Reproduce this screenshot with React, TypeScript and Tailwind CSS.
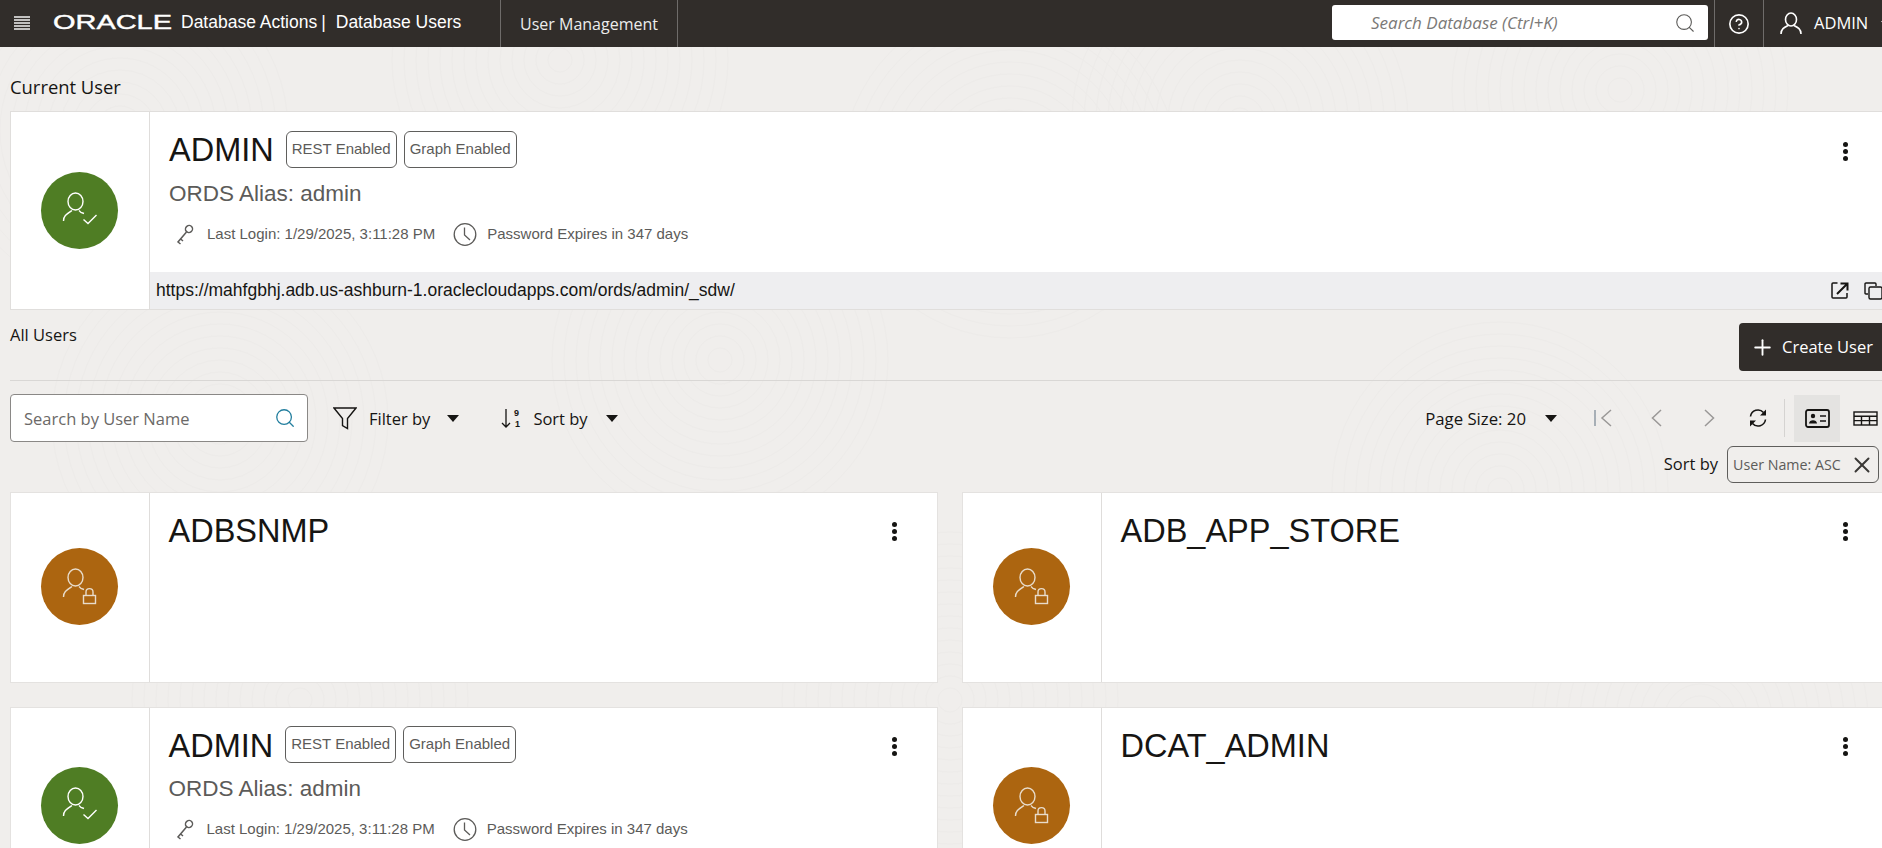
import React from 'react';
import { Search, Plus, X, CircleHelp } from 'lucide-react';

const LIST_USERS = [
  { name: 'ADBSNMP', active: false },
  { name: 'ADB_APP_STORE', active: false },
  { name: 'ADMIN', active: true },
  { name: 'DCAT_ADMIN', active: false },
];

const SWIRLS = [
  { x: 120, y: 130 }, { x: 560, y: 60 }, { x: 1010, y: 170 }, { x: 1240, y: 120 },
  { x: 1620, y: 90 }, { x: 220, y: 420 }, { x: 720, y: 360 }, { x: 1500, y: 490 },
  { x: 950, y: 700 }, { x: 300, y: 700 }, { x: 1700, y: 720 },
];

const SWIRL_RADII = [12, 24, 36, 48, 60, 72, 84, 96, 108, 120, 132, 144, 156, 168];

function Caret() {
  return <span className="inline-block h-0 w-0 border-x-[6px] border-t-[7px] border-x-transparent border-t-[#161513]" />;
}

function Avatar({ active }: { active: boolean }) {
  const stroke = active ? '#ffffff' : '#e8dccb';
  return (
    <div className={`flex h-[77px] w-[77px] shrink-0 items-center justify-center rounded-full ${active ? 'bg-[#4f7d24]' : 'bg-[#ac6510]'}`}>
      <svg width="77" height="77" viewBox="0 0 77 77" fill="none" stroke={stroke} strokeWidth="1.4">
        <ellipse cx="34.5" cy="29.5" rx="7.5" ry="8.5" />
        <path d="M22.5 49 C22.5 44 25 42.5 31 38.5 M38 38.5 L40 40.5 L43 41.5" />
        {active ? (
          <path d="M42.5 47.5 L47 51.5 L55.5 43" />
        ) : (
          <g>
            <rect x="42.5" y="47.5" width="12" height="8" />
            <path d="M45 47.5 V44 C45 39.5 52 39.5 52 44 V47.5" />
          </g>
        )}
      </svg>
    </div>
  );
}

function Kebab() {
  return (
    <div className="flex flex-col gap-[2px]">
      <span className="h-[5px] w-[5px] rounded-full bg-[#161513]" />
      <span className="h-[5px] w-[5px] rounded-full bg-[#161513]" />
      <span className="h-[5px] w-[5px] rounded-full bg-[#161513]" />
    </div>
  );
}

function Badge({ children }: { children: React.ReactNode }) {
  return (
    <span className="flex h-[37px] items-center rounded-[6px] border border-[#5f5e5c] px-[5px] text-[15px] text-[#5c5b59]">
      {children}
    </span>
  );
}

function UserDetails() {
  return (
    <>
      <div className="mt-[11px] h-[30px] text-[22.5px] leading-[30px] text-[#5c5b59]">ORDS Alias: admin</div>
      <div className="mt-[13px] flex h-[24px] items-center text-[15px] text-[#5c5b59]">
        <svg className="ml-[7px]" width="18" height="21" viewBox="0 0 18 21" fill="none" stroke="#5c5b59" strokeWidth="1.5">
          <ellipse cx="13" cy="5" rx="3.6" ry="3.4" transform="rotate(-40 13 5)" />
          <path d="M10.5 8 L2 18 L4.5 20 M4.7 15 L7 17" />
        </svg>
        <span className="ml-[13px]">Last Login: 1/29/2025, 3:11:28 PM</span>
        <svg className="ml-[18px]" width="24" height="25" viewBox="0 0 24 25" fill="none" stroke="#5c5b59" strokeWidth="1.3">
          <circle cx="12" cy="12.5" r="10.8" />
          <path d="M11.5 5.5 V13 L17 18" />
        </svg>
        <span className="ml-[10px]">Password Expires in 347 days</span>
      </div>
    </>
  );
}

function UserCard({ name, active }: { name: string; active: boolean }) {
  return (
    <div className="flex border border-[#e4e2e0] bg-white">
      <div className="flex w-[138.5px] shrink-0 items-center justify-center border-r border-[#dfdddb] pb-[2px]">
        <Avatar active={active} />
      </div>
      <div className="flex min-w-0 flex-1 justify-between pl-[19px] pr-[40px] pt-[18px]">
        <div>
          <div className="flex items-center">
            <h2 className="mr-[12px] h-[37px] text-[32.5px] leading-[40px] text-[#161513]">{name}</h2>
            {active && (
              <div className="flex gap-[7px]">
                <Badge>REST Enabled</Badge>
                <Badge>Graph Enabled</Badge>
              </div>
            )}
          </div>
          {active && <UserDetails />}
        </div>
        <div className="pt-[11px]">
          <Kebab />
        </div>
      </div>
    </div>
  );
}

function Header() {
  return (
    <header className="flex h-[47px] w-[1882px] items-stretch bg-[#312d2a] text-white">
      <svg className="ml-[14px] mt-[16px] shrink-0" width="16" height="14" viewBox="0 0 16 14" stroke="#f2f2f2" strokeWidth="1.3">
        <path d="M0 1 H16 M0 4 H16 M0 7 H16 M0 10 H16 M0 13 H16" />
      </svg>
      <svg className="ml-[23px] mt-[12px] shrink-0" width="122" height="20" viewBox="0 0 122 20">
        <text x="0" y="17" fontFamily="'Liberation Sans', sans-serif" fontSize="19.5" fill="#ffffff" stroke="#ffffff" strokeWidth="0.4" textLength="119" lengthAdjust="spacingAndGlyphs">ORACLE</text>
      </svg>
      <div className="ml-[6px] flex w-[319px] shrink-0 items-center pb-[3px] text-[17.5px]">
        <span>Database Actions</span>
        <span className="ml-[4px]">|</span>
        <span className="ml-[10px]">Database Users</span>
      </div>
      <div className="flex w-[178px] shrink-0 items-center justify-center border-x border-[#6f6c6a] font-['Open_Sans',sans-serif] text-[16px] text-[#ececec]">
        User Management
      </div>
      <div className="ml-[654px] mt-[5px] flex h-[35px] w-[376px] shrink-0 items-center justify-between rounded-[3px] bg-white pl-[39px] pr-[12px] font-['Open_Sans',sans-serif] text-[17px] italic text-[#7b7977]">
        <span>Search Database (Ctrl+K)</span>
        <Search size={22} strokeWidth={1.2} className="text-[#5c5b59]" />
      </div>
      <div className="ml-[6px] flex w-[50px] shrink-0 items-center justify-center border-x border-[#6f6c6a]">
        <CircleHelp size={22} strokeWidth={1.8} />
      </div>
      <div className="flex shrink-0 items-center pl-[16px] font-['Open_Sans',sans-serif] text-[16.5px]">
        <svg width="22" height="23" viewBox="0 0 22 23" fill="none" stroke="#ffffff" strokeWidth="1.6">
          <ellipse cx="11" cy="7.5" rx="5.5" ry="6.5" />
          <path d="M1 22 C1 17 4 15.5 8 13.5 M14 13.5 C18 15.5 21 17 21 22" />
        </svg>
        <span className="ml-[12px] shrink-0">ADMIN</span>
        <span className="ml-[13px] h-0 w-0 shrink-0 border-x-[5px] border-t-[6px] border-x-transparent border-t-white" />
      </div>
    </header>
  );
}

function CurrentUser() {
  return (
    <div className="flex h-[199px] border border-[#e0dedc] bg-white">
      <div className="flex w-[139px] shrink-0 items-center justify-center border-r border-[#dfdddb] pr-[2px]">
        <Avatar active />
      </div>
      <div className="flex min-w-0 flex-1 flex-col">
        <div className="flex flex-1 justify-between pl-[19px] pr-[40px] pt-[19px]">
          <div>
            <div className="flex items-center">
              <h2 className="mr-[12px] h-[37px] text-[32.5px] leading-[39px] text-[#161513]">ADMIN</h2>
              <div className="flex gap-[7px]">
                <Badge>REST Enabled</Badge>
                <Badge>Graph Enabled</Badge>
              </div>
            </div>
            <UserDetails />
          </div>
          <div className="pt-[11px]">
            <Kebab />
          </div>
        </div>
        <div className="flex h-[37px] items-center justify-between bg-[#eeeef0] pl-[6px] pr-[5px] text-[17.5px] text-[#161513]">
          <span>https://mahfgbhj.adb.us-ashburn-1.oraclecloudapps.com/ords/admin/_sdw/</span>
          <div className="flex items-center gap-[14px]">
            <svg width="19" height="19" viewBox="0 0 19 19" fill="none" stroke="#161513" strokeWidth="1.5">
              <path d="M6.5 2 H2 Q1 2 1 3 V16 Q1 17 2 17 H15 Q16 17 16 16 V12" />
              <path d="M6 13 L15.5 3.5 M9.5 2.5 H16.5 V9.5" strokeWidth="2" />
            </svg>
            <svg width="19" height="19" viewBox="0 0 19 19" fill="none" stroke="#161513" strokeWidth="1.4">
              <path d="M4 13 H2 Q1 13 1 12 V3 Q1 2 2 2 H11 Q12 2 12 3 V5" />
              <rect x="5" y="6" width="13" height="12" rx="1.5" />
            </svg>
          </div>
        </div>
      </div>
    </div>
  );
}

function Toolbar() {
  return (
    <div className="mt-[13px] flex h-[48px] items-center pr-[11px] font-['Open_Sans',sans-serif] text-[16.5px] text-[#161513]">
      <div className="flex h-[48px] w-[298px] items-center justify-between rounded-[4px] border border-[#8a8886] bg-white pl-[13px] pr-[11px] text-[#6b6967]">
        <span className="pt-[2px]">Search by User Name</span>
        <Search size={22} strokeWidth={1.4} className="text-[#227e9e]" />
      </div>
      <svg className="ml-[25px]" width="24" height="23" viewBox="0 0 24 23" fill="none" stroke="#161513" strokeWidth="1.4">
        <path d="M1 1 H23 L14.5 11.5 V21.5 L9.5 18.5 V11.5 Z" />
      </svg>
      <span className="ml-[12px] pt-[2px]">Filter by</span>
      <span className="ml-[17px] flex"><Caret /></span>
      <svg className="ml-[42px]" width="22" height="22" viewBox="0 0 22 22" fill="none" stroke="#161513" strokeWidth="1.3">
        <path d="M5 2 V20 M1 16 L5 20 L9 16" />
        <text x="13" y="9" fontSize="9" fontFamily="'Liberation Sans', sans-serif" fontWeight="bold" fill="#161513" stroke="none">9</text>
        <text x="14" y="20" fontSize="9" fontFamily="'Liberation Sans', sans-serif" fontWeight="bold" fill="#161513" stroke="none">1</text>
      </svg>
      <span className="ml-[10px] pt-[2px]">Sort by</span>
      <span className="ml-[18px] flex"><Caret /></span>

      <div className="ml-auto flex items-center">
        <span className="pt-[2px] text-[16.75px]">Page Size: 20</span>
        <span className="ml-[19px] flex"><Caret /></span>
        <svg className="ml-[37px]" width="18" height="18" viewBox="0 0 18 18" fill="none" stroke="#9a9897" strokeWidth="1.5">
          <path d="M1 1 V17" stroke="#8f9aa5" />
          <path d="M17 1 L8 9 L17 17" />
        </svg>
        <svg className="ml-[39px]" width="11" height="18" viewBox="0 0 11 18" fill="none" stroke="#9a9897" strokeWidth="1.5">
          <path d="M10 1 L1.5 9 L10 17" />
        </svg>
        <svg className="ml-[42px]" width="11" height="18" viewBox="0 0 11 18" fill="none" stroke="#9a9897" strokeWidth="1.5">
          <path d="M1 1 L9.5 9 L1 17" />
        </svg>
        <svg className="ml-[33px]" width="20" height="20" viewBox="0 0 20 20" fill="none" stroke="#161513" strokeWidth="1.6">
          <path d="M2.5 8.5 A7.5 7.5 0 0 1 15.5 4.5" />
          <path d="M17.5 11.5 A7.5 7.5 0 0 1 4.5 15.5" />
          <path d="M18 1.5 V7.5 H12 Z M2 18.5 V12.5 H8 Z" fill="#161513" stroke="none" />
        </svg>
        <span className="ml-[16px] h-[38px] w-px bg-[#d5d3d1]" />
        <div className="ml-[9px] flex h-[47px] w-[46px] items-center justify-center bg-[#e4e3e1]">
          <svg width="25" height="19" viewBox="0 0 25 19" fill="none" stroke="#161513" strokeWidth="1.8">
            <rect x="1" y="1" width="23" height="17" rx="2" />
            <circle cx="8" cy="7" r="2.2" fill="#161513" stroke="none" />
            <path d="M4 14.5 C4 10 12 10 12 14.5 Z" fill="#161513" stroke="none" />
            <path d="M15 7 H21 M15 12 H21" strokeWidth="1.4" />
          </svg>
        </div>
        <svg className="ml-[13px]" width="25" height="15" viewBox="0 0 25 15" fill="none" stroke="#161513" strokeWidth="1.4">
          <rect x="1" y="1" width="23" height="13" />
          <path d="M1 5.2 H24 M1 9.6 H24 M8.5 5 V14 M16.5 5 V14" />
        </svg>
      </div>
    </div>
  );
}

export default function App() {
  return (
    <div className="relative h-[848px] w-[1882px] overflow-hidden bg-[#f0eeec] font-['Liberation_Sans',Arial,sans-serif]">
      {/* faint swirl texture of the page background */}
      <svg className="pointer-events-none absolute inset-0" width="1882" height="848" fill="none" stroke="#edebe9" strokeWidth="1">
        {SWIRLS.map((s) =>
          SWIRL_RADII.map((r) => <circle key={`${s.x}-${r}`} cx={s.x} cy={s.y} r={r} />)
        )}
      </svg>

      <div className="relative">
        <Header />
        <main className="w-[1889px] pl-[10px]">
          <div className="flex h-[64px] items-center pt-[16px] font-['Open_Sans',sans-serif] text-[18.4px] text-[#161513]">
            Current User
          </div>
          <CurrentUser />

          <div className="flex h-[71px] justify-between border-b border-[#d9d7d5] pt-[13px] font-['Open_Sans',sans-serif]">
            <span className="text-[16.5px] leading-[24px] text-[#161513]">All Users</span>
            <button className="flex h-[48px] w-[150px] items-center rounded-[4px] bg-[#312d2a] pl-[11px] text-[16.5px] text-white">
              <Plus size={25} strokeWidth={1.8} />
              <span className="ml-[7px]">Create User</span>
            </button>
          </div>

          <Toolbar />

          <div className="mt-[4px] flex h-[37px] items-center justify-end pr-[10px] font-['Open_Sans',sans-serif] text-[#161513]">
            <span className="text-[16.5px]">Sort by</span>
            <div className="ml-[9px] flex h-[37px] w-[152px] items-center justify-between rounded-[6px] border border-[#5f5e5c] pl-[5px] pr-[3px] text-[14.25px] text-[#5c5b59]">
              <span>User Name: ASC</span>
              <X size={26} strokeWidth={1.8} className="text-[#3a3836]" />
            </div>
          </div>

          <div className="mt-[9px] grid grid-cols-[928px_927px] grid-rows-[191px_198px] gap-x-[24px] gap-y-[24px]">
            {LIST_USERS.map((u) => (
              <UserCard key={u.name} name={u.name} active={u.active} />
            ))}
          </div>
        </main>
      </div>
    </div>
  );
}
